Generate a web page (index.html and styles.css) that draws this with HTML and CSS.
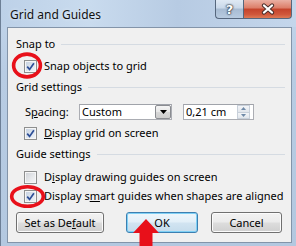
FILE: index.html
```html
<!DOCTYPE html>
<html>
<head>
<meta charset="utf-8">
<title>Grid and Guides</title>
<link rel="stylesheet" href="styles.css">
</head>
<body>
<div class="window">
  <div class="titlebar">
    <span class="title">Grid and Guides</span>
    <div class="caption">
      <span class="cap help">?</span>
      <span class="cap close"><svg width="16" height="12" viewBox="0 0 16 12"><path d="M4 2.5 L12 9.5 M12 2.5 L4 9.5" stroke="#4a2e2a" stroke-width="4.2" stroke-linecap="round"/><path d="M4 2.5 L12 9.5 M12 2.5 L4 9.5" stroke="#ffffff" stroke-width="2.3" stroke-linecap="round"/></svg></span>
    </div>
  </div>
  <div class="client">
    <section class="group">
      <div class="ghead"><span>Snap to</span><i class="rule"></i></div>
      <div class="gbody">
        <div class="row"><span class="cb on"><svg width="9" height="9" viewBox="0 0 9 9"><path d="M1.2 4.6 L3.6 7.4 L7.9 1.2" fill="none" stroke="#2c4e97" stroke-width="1.7"/></svg></span><span>Snap objects to <u>g</u>rid</span></div>
      </div>
    </section>
    <section class="group">
      <div class="ghead"><span>Grid settings</span><i class="rule"></i></div>
      <div class="gbody">
        <div class="row ctrl-row">
          <span class="field-label">S<u>p</u>acing:</span>
          <div class="combo"><span class="combo-text">Custom</span><span class="drop"><svg width="7" height="4" viewBox="0 0 7 4"><path d="M0 0 H7 L3.5 4 Z" fill="#000"/></svg></span></div>
          <div class="spin"><span class="spin-text">0,21 cm</span><span class="spin-btns"><span class="sb"><svg width="5" height="3" viewBox="0 0 5 3"><path d="M0 3 H5 L2.5 0 Z" fill="#6f8aa8"/></svg></span><span class="sb"><svg width="5" height="3" viewBox="0 0 5 3"><path d="M0 0 H5 L2.5 3 Z" fill="#6f8aa8"/></svg></span></span></div>
        </div>
        <div class="row"><span class="cb on"><svg width="9" height="9" viewBox="0 0 9 9"><path d="M1.2 4.6 L3.6 7.4 L7.9 1.2" fill="none" stroke="#2c4e97" stroke-width="1.7"/></svg></span><span><u>D</u>isplay grid on screen</span></div>
      </div>
    </section>
    <section class="group group-guides">
      <div class="ghead"><span>Guide settings</span><i class="rule"></i></div>
      <div class="gbody">
        <div class="row"><span class="cb"></span><span>D<u>i</u>splay drawing guides on screen</span></div>
        <div class="row"><span class="cb on"><svg width="9" height="9" viewBox="0 0 9 9"><path d="M1.2 4.6 L3.6 7.4 L7.9 1.2" fill="none" stroke="#2c4e97" stroke-width="1.7"/></svg></span><span>Display s<u>m</u>art guides when shapes are aligned</span></div>
      </div>
    </section>
    <div class="buttons">
      <span class="btn btn-default-set">Set as De<u>f</u>ault</span>
      <span class="btn btn-ok">OK</span>
      <span class="btn btn-cancel">Cancel</span>
    </div>
  </div>
  <svg class="annot" width="296" height="246" viewBox="0 0 296 246">
    <ellipse cx="27" cy="65.5" rx="13.4" ry="11.4" fill="none" stroke="#e8101a" stroke-width="3.6"/>
    <ellipse cx="27.5" cy="196.5" rx="15.8" ry="9.8" fill="none" stroke="#e8101a" stroke-width="3.6"/>
    <polygon points="146,219 159,233 152.5,233 152.5,246 139.5,246 139.5,233 133,233" fill="#e8101a"/>
  </svg>
</div>
</body>
</html>
```

FILE: styles.css
```css
html, body {
  margin: 0;
  padding: 0;
}
body {
  width: 296px;
  height: 246px;
  overflow: hidden;
  font-family: "Noto Sans", "Open Sans", sans-serif;
  font-size: 11px;
  color: #000;
}
.window {
  position: relative;
  width: 296px;
  height: 246px;
  box-sizing: border-box;
  overflow: hidden;
  border-left: 1px solid #6d7f96;
  background: linear-gradient(180deg, #c3d6ec 0%, #b8cce3 30%, #b3c8e0 100%);
  display: flex;
  flex-direction: column;
}
.titlebar {
  height: 27px;
  flex: none;
  display: flex;
  align-items: flex-start;
  padding-left: 9px;
  min-width: 0;
  background: linear-gradient(90deg, #bdd1e8 0%, #c9dbee 30%, #b7cbe3 60%, #c4d6eb 100%);
}
.title {
  margin-top: 6px;
  line-height: 18px;
  font-size: 12px;
  color: #111;
  text-shadow: 0 0 3px #e6eef8;
}
.caption {
  margin-left: auto;
  margin-right: 4px;
  display: flex;
}
.cap {
  box-sizing: border-box;
  height: 19px;
  display: flex;
  align-items: center;
  justify-content: center;
  border: 1px solid #56677d;
  border-top: none;
}
.help {
  width: 28px;
  border-right: none;
  border-radius: 0 0 0 4px;
  background: linear-gradient(180deg, #dfe9f4 0%, #c9d8e9 45%, #a7bbd2 50%, #b8cbe0 100%);
  color: #fff;
  font-family: "DejaVu Sans", sans-serif;
  font-weight: bold;
  font-size: 13px;
  line-height: 17px;
  text-shadow: 0 0 1px #2c3440, 0 0 2px #2c3440, 0 0 2px #2c3440;
}
.close {
  width: 49px;
  border-radius: 0 0 4px 0;
  background: linear-gradient(180deg, #eab0a3 0%, #dc7c67 45%, #c4432b 50%, #d0573b 80%, #de7a55 100%);
}
.client {
  flex: 1;
  min-width: 0;
  margin: 0 4px 3px 6px;
  border: 1px solid #8394a9;
  background: #f0f0f0;
  padding: 8px 0 0 8px;
  display: flex;
  flex-direction: column;
}
.group + .group {
  margin-top: 5px;
}
.ghead {
  display: flex;
  align-items: center;
  height: 16px;
  line-height: 16px;
  padding-right: 6px;
}
.rule {
  flex: 1;
  height: 1px;
  margin-left: 6px;
  background: #d5dbe2;
}
.gbody {
  padding-left: 8px;
  padding-top: 6px;
  display: flex;
  flex-direction: column;
  gap: 4px;
}
.group-guides .gbody {
  padding-top: 7px;
  gap: 3px;
}
.row {
  display: flex;
  align-items: center;
  height: 16px;
  line-height: 16px;
  white-space: nowrap;
}
.ctrl-row {
  margin-top: 3px;
  margin-bottom: 1px;
}
.cb {
  box-sizing: border-box;
  flex: none;
  width: 13px;
  height: 13px;
  margin-right: 7px;
  border: 1px solid #8e8f8f;
  background: linear-gradient(135deg, #cdd0d5 0%, #e6e8eb 55%, #f7f7f7 100%);
  box-shadow: inset 0 0 0 1px #f6f6f6;
  display: flex;
  align-items: center;
  justify-content: center;
}
.cb.on {
  background: linear-gradient(135deg, #c3cfdf 0%, #dfe6ef 55%, #f3f6fa 100%);
}
.field-label {
  width: 55px;
  padding-left: 1px;
  box-sizing: border-box;
}
.combo {
  box-sizing: border-box;
  width: 93px;
  height: 16px;
  display: flex;
  border: 1px solid #abadb3;
  border-top-color: #a0a3aa;
  background: #fff;
}
.combo-text {
  flex: 1;
  padding-left: 2px;
  line-height: 14px;
}
.drop {
  box-sizing: border-box;
  width: 16px;
  height: 14px;
  display: flex;
  align-items: center;
  justify-content: center;
  border: 1px solid #8a8c91;
  border-radius: 2px;
  background: linear-gradient(180deg, #f4f4f4 0%, #e7e7e7 50%, #d8d8d8 51%, #cdcdcd 100%);
}
.spin {
  box-sizing: border-box;
  width: 71px;
  height: 16px;
  margin-left: 11px;
  display: flex;
  border: 1px solid #abadb3;
  border-top-color: #a0a3aa;
  background: #fff;
}
.spin-text {
  flex: 1;
  padding-left: 2px;
  line-height: 14px;
}
.spin-btns {
  width: 13px;
  margin-right: 3px;
  display: flex;
  flex-direction: column;
}
.sb {
  flex: 1;
  display: flex;
  align-items: center;
  justify-content: center;
  background: linear-gradient(180deg, #f3f5f8 0%, #e1e6ec 100%);
  border: 1px solid #c8d0da;
}
.sb + .sb {
  border-top: none;
}
.buttons {
  margin-top: 8px;
  display: flex;
}
.btn {
  box-sizing: border-box;
  flex: none;
  height: 21px;
  display: flex;
  align-items: center;
  justify-content: center;
  border: 1px solid #707070;
  border-radius: 3px;
  background: linear-gradient(180deg, #f2f2f2 0%, #ebebeb 48%, #dddddd 52%, #cfcfcf 100%);
  box-shadow: inset 0 0 0 1px #fbfbfb;
  white-space: nowrap;
}
.btn-default-set {
  width: 88px;
}
.btn-ok {
  width: 72px;
  margin-left: 22px;
  border-color: #3c7fb1;
  background: linear-gradient(180deg, #eef6fb 0%, #e2eff8 48%, #d2e4f1 52%, #c5dcec 100%);
  box-shadow: inset 0 0 0 1px #7fd0f5;
}
.btn-cancel {
  width: 71px;
  margin-left: 13px;
}
.annot {
  position: absolute;
  left: -1px;
  top: 0;
  pointer-events: none;
}
```
